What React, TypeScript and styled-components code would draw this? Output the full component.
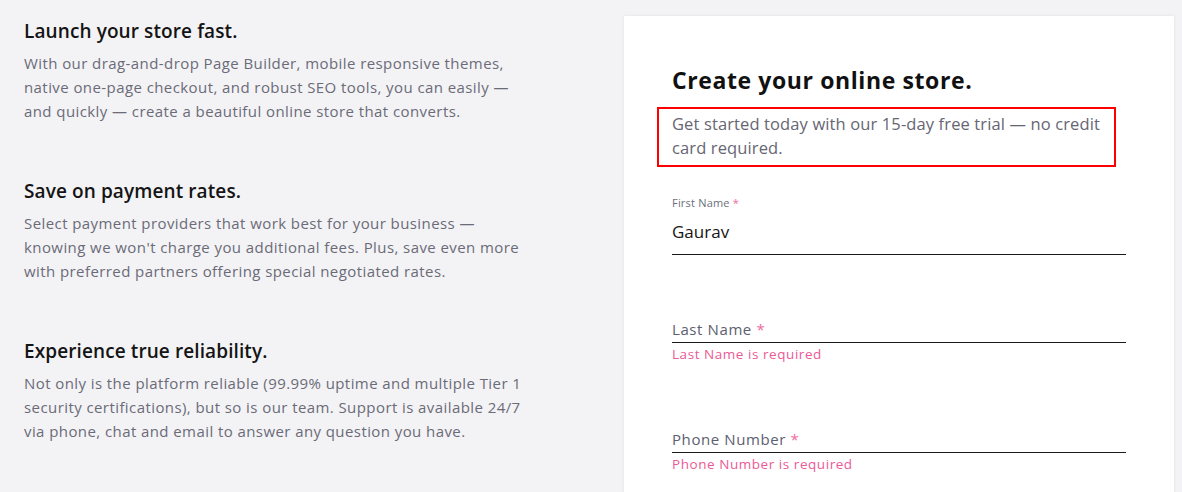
import styled, { createGlobalStyle } from "styled-components";

const GlobalStyle = createGlobalStyle`
  html, body {
    margin: 0;
    padding: 0;
    background: #f3f3f6;
    font-family: "Open Sans", "Liberation Sans", sans-serif;
  }
  * { box-sizing: border-box; }
`;

const Page = styled.div`
  display: flex;
  align-items: flex-start;
  height: 492px;
  overflow: hidden;
`;

const Features = styled.div`
  width: 624px;
  padding: 19px 0 0 24px;
`;

const Feature = styled.section`
  margin-bottom: 56px;
`;

const FeatureTitle = styled.h3`
  margin: 0 0 8px;
  font-size: 19px;
  line-height: 24px;
  font-weight: 600;
  color: #141414;
  letter-spacing: 0.1px;
`;

const FeatureText = styled.p`
  margin: 0;
  width: 505px;
  font-size: 15px;
  line-height: 24px;
  letter-spacing: 0.42px;
  color: #6b6b77;
`;

const Card = styled.div`
  width: 550px;
  margin-top: 16px;
  min-height: 520px;
  background: #fff;
  padding: 49px 48px 0;
  box-shadow: 0 0 3px rgba(0, 0, 0, 0.08);
`;

const CardTitle = styled.h2`
  margin: 0 0 12px;
  font-size: 23px;
  line-height: 30px;
  font-weight: 700;
  letter-spacing: 0.6px;
  color: #111;
`;

const Highlight = styled.p`
  margin: 0 0 0 -15px;
  width: 459px;
  padding: 3px 4px 5px 13px;
  border: 2px solid #f00;
  font-size: 16.5px;
  line-height: 24px;
  letter-spacing: 0.12px;
  color: #666673;
`;

const Field = styled.div`
  margin-top: 28px;
`;

const InputBox = styled.div<{ $filled?: boolean }>`
  height: 60px;
  display: flex;
  flex-direction: column;
  justify-content: ${(p) => (p.$filled ? "flex-start" : "flex-end")};
  padding: ${(p) => (p.$filled ? "0" : "0 0 3px")};
  border-bottom: 1px solid #1b1b1b;
`;

const SmallLabel = styled.label`
  font-size: 11px;
  line-height: 16px;
  letter-spacing: 0.2px;
  color: #6b6f7c;
`;

const Placeholder = styled.label`
  font-size: 15px;
  line-height: 20px;
  letter-spacing: 0.6px;
  color: #5c6070;
`;

const Star = styled.span`
  color: #ef6aa0;
`;

const Value = styled.div`
  margin-top: 9px;
  font-size: 17px;
  line-height: 24px;
  color: #161616;
`;

const ErrorText = styled.div`
  font-size: 13.5px;
  line-height: 22px;
  letter-spacing: 0.55px;
  color: #ec5a96;
`;

type FieldProps = { label: string; value?: string; error?: string };

const FormField = ({ label, value, error }: FieldProps) => (
  <Field>
    <InputBox $filled={!!value}>
      {value ? (
        <>
          <SmallLabel>
            {label} <Star>*</Star>
          </SmallLabel>
          <Value>{value}</Value>
        </>
      ) : (
        <Placeholder>
          {label} <Star>*</Star>
        </Placeholder>
      )}
    </InputBox>
    {error && <ErrorText>{error}</ErrorText>}
  </Field>
);

const features = [
  {
    title: "Launch your store fast.",
    text: "With our drag-and-drop Page Builder, mobile responsive themes, native one-page checkout, and robust SEO tools, you can easily — and quickly — create a beautiful online store that converts.",
  },
  {
    title: "Save on payment rates.",
    text: "Select payment providers that work best for your business — knowing we won't charge you additional fees. Plus, save even more with preferred partners offering special negotiated rates.",
  },
  {
    title: "Experience true reliability.",
    text: "Not only is the platform reliable (99.99% uptime and multiple Tier 1 security certifications), but so is our team. Support is available 24/7 via phone, chat and email to answer any question you have.",
  },
];

const App = () => (
  <>
    <GlobalStyle />
    <Page>
      <Features>
        {features.map((f) => (
          <Feature key={f.title}>
            <FeatureTitle>{f.title}</FeatureTitle>
            <FeatureText>{f.text}</FeatureText>
          </Feature>
        ))}
      </Features>
      <Card>
        <CardTitle>Create your online store.</CardTitle>
        <Highlight>
          Get started today with our 15-day free trial — no credit card required.
        </Highlight>
        <FormField label="First Name" value="Gaurav" />
        <FormField label="Last Name" error="Last Name is required" />
        <FormField label="Phone Number" error="Phone Number is required" />
      </Card>
    </Page>
  </>
);

export default App;
